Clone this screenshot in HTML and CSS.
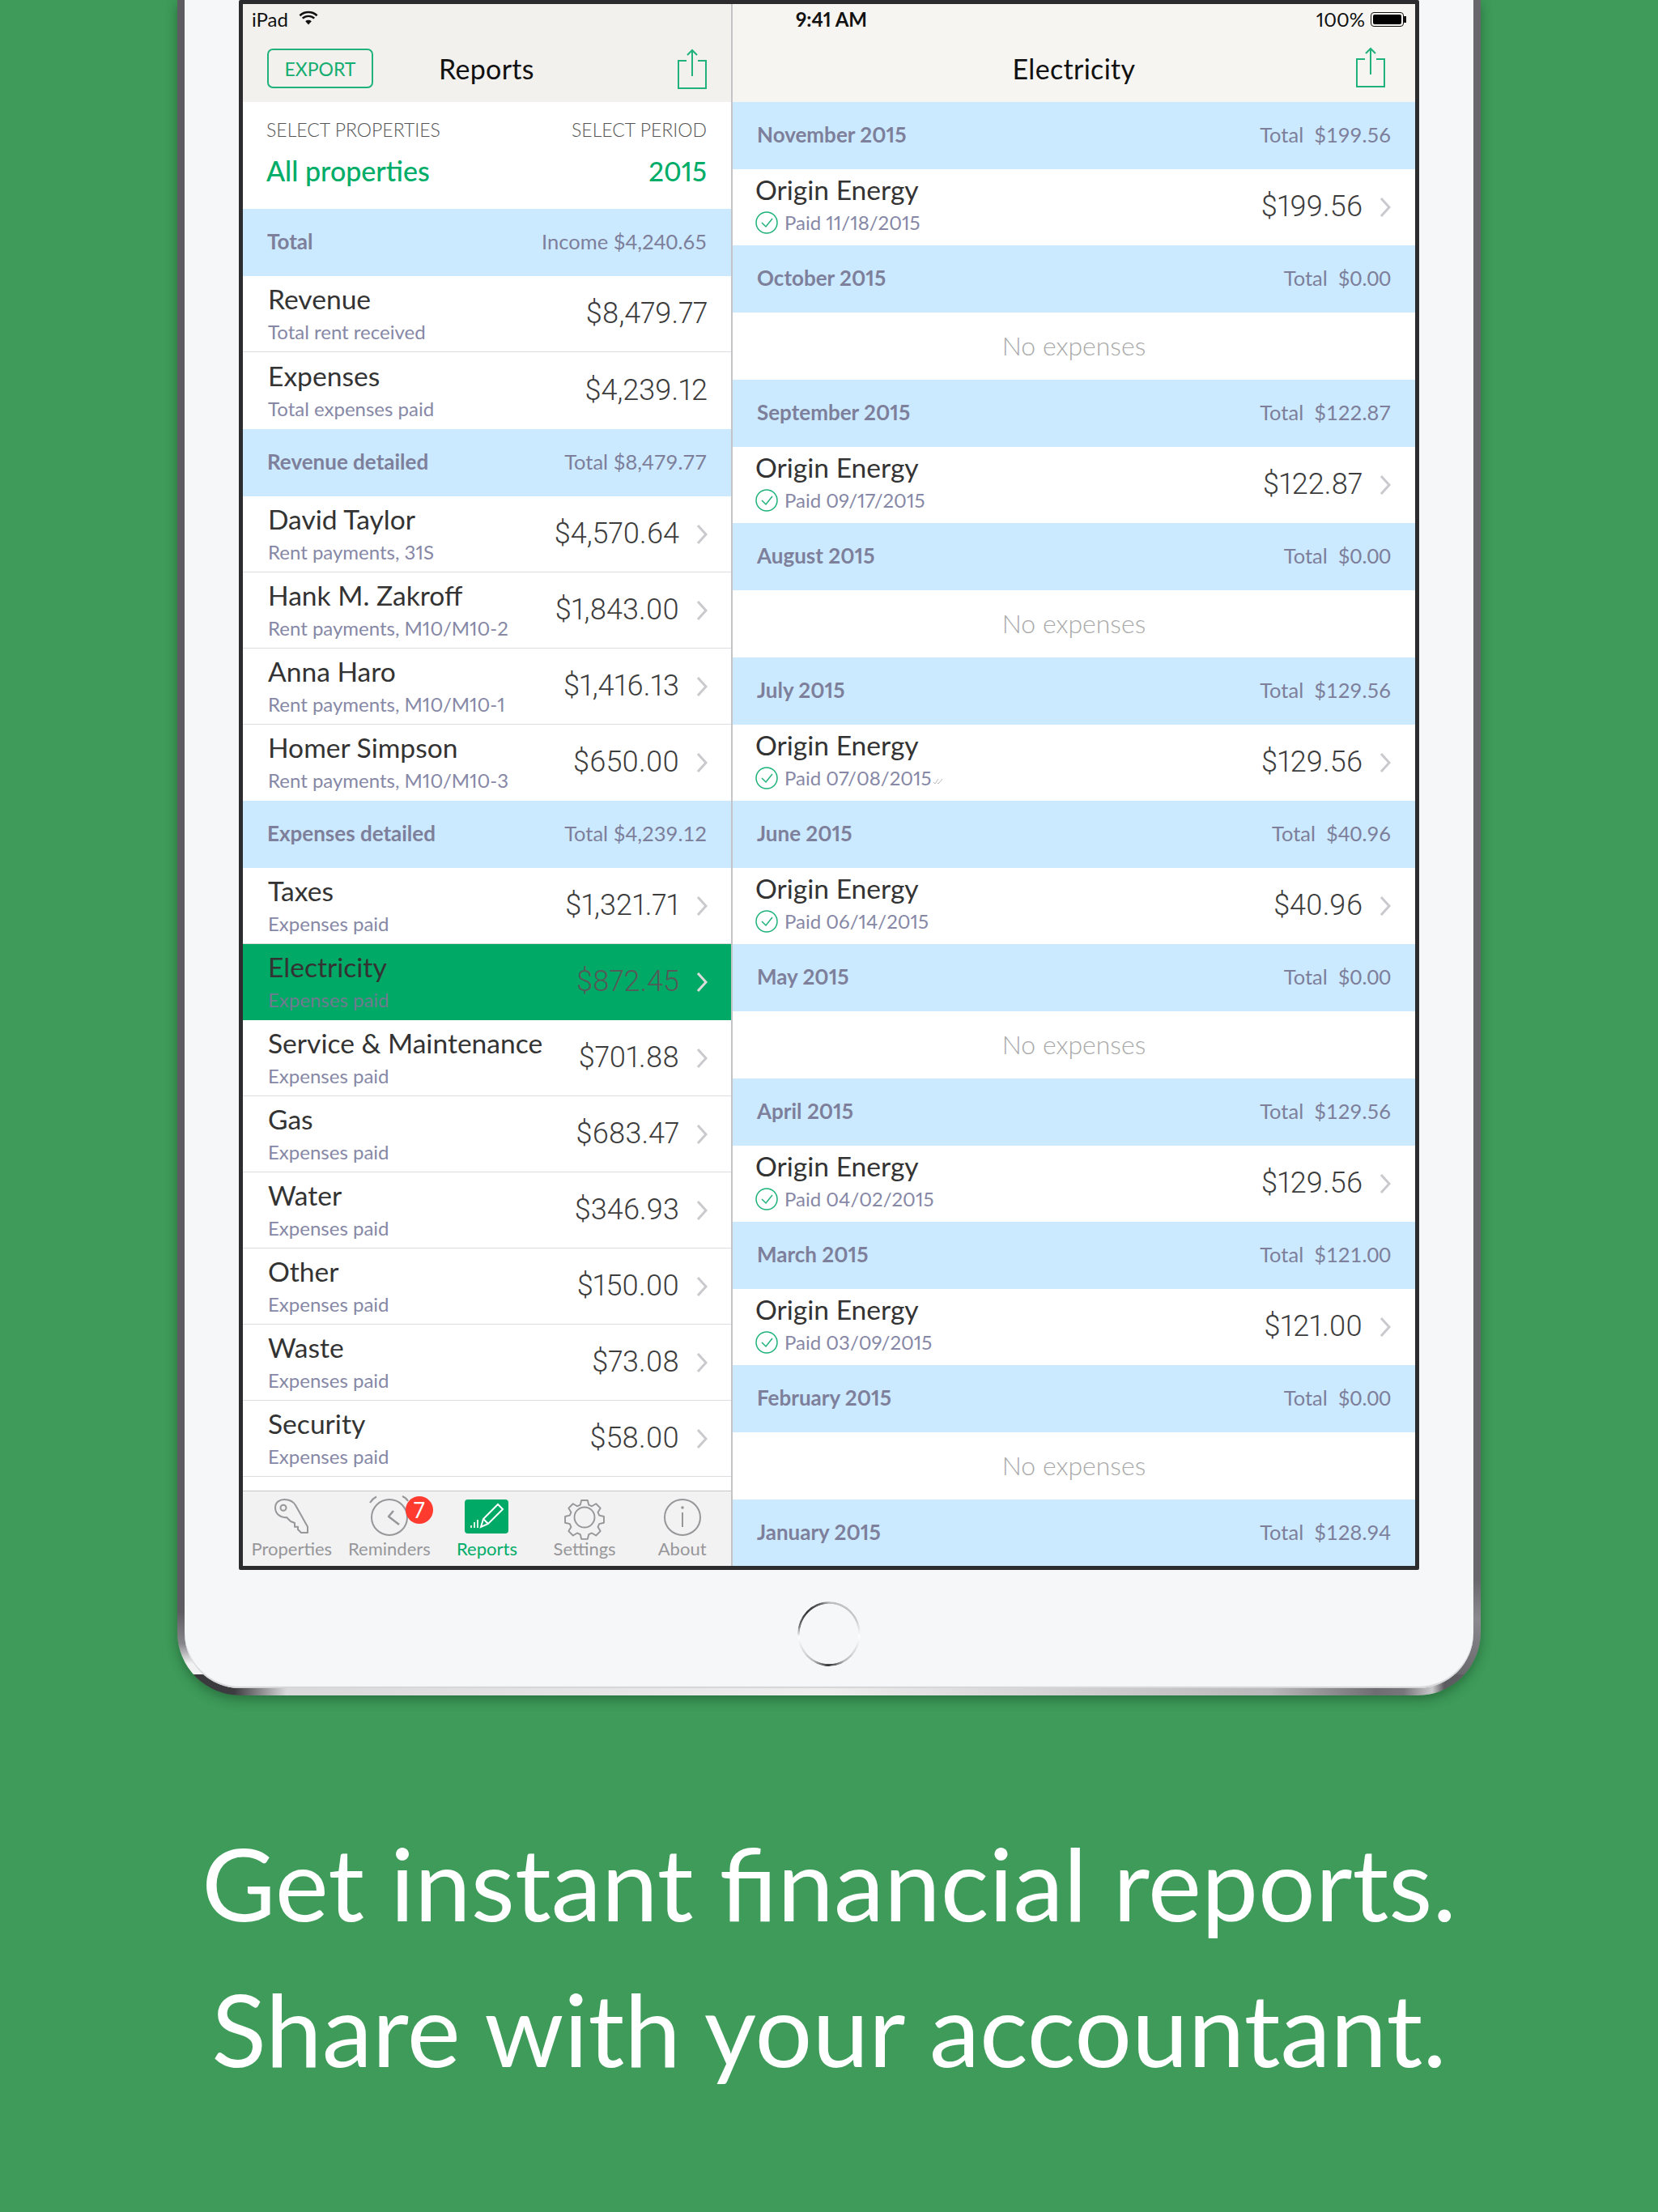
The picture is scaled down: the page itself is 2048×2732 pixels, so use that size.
FILE: index.html
```html
<!DOCTYPE html>
<html lang="en">

<head>
  <meta charset="UTF-8">
  <title>Reports</title>
  <link rel="stylesheet" href="styles.css">
</head>

<body>
  <div class="device">
    <div class="bezel">
      <div class="screen">

        <div class="pane pane-left">
          <div class="topbar">
            <div class="status">
              <span>iPad</span>
              <svg class="wifi" viewBox="0 0 24 18"><path d="M12 17.500 8.200 13.200a5.600 5.600 0 0 1 7.600 0z"/><path d="M5.600 10.600a9.400 9.400 0 0 1 12.800 0l1.700-1.800a12 12 0 0 0-16.200 0z"/><path d="M2.300 7.200a14 14 0 0 1 19.400 0l1.800-1.900a17 17 0 0 0-23 0z"/></svg>
            </div>
            <div class="nav">
              <div class="export">EXPORT</div>
              <div class="nav-title">Reports</div>
              <svg class="share" viewBox="0 0 36 50"><path d="M11 15H1v34h34V15H25M18 34V2M12 8l6-6 6 6"/></svg>
            </div>
          </div>

          <div class="pickers">
            <div class="picker-labels"><span>SELECT PROPERTIES</span><span>SELECT PERIOD</span></div>
            <div class="picker-values"><span>All properties</span><span class="year">2015</span></div>
          </div>

          <div class="list">
            <div class="head"><b>Total</b><span>Income $4,240.65</span></div>
            <div class="row">
              <div class="row-text"><div class="title">Revenue</div><div class="sub">Total rent received</div></div>
              <div class="amount">$8,479.77</div>
            </div>
            <div class="row last tall">
              <div class="row-text"><div class="title">Expenses</div><div class="sub">Total expenses paid</div></div>
              <div class="amount">$4,239.12</div>
            </div>

            <div class="head"><b>Revenue detailed</b><span>Total $8,479.77</span></div>
            <div class="row">
              <div class="row-text"><div class="title">David Taylor</div><div class="sub">Rent payments, 31S</div></div>
              <div class="amount">$4,570.64</div><svg class="chev" viewBox="0 0 14 26"><path d="M2 2l10 11L2 24"/></svg>
            </div>
            <div class="row">
              <div class="row-text"><div class="title">Hank M. Zakroff</div><div class="sub">Rent payments, M10/M10-2</div></div>
              <div class="amount">$1,843.00</div><svg class="chev" viewBox="0 0 14 26"><path d="M2 2l10 11L2 24"/></svg>
            </div>
            <div class="row">
              <div class="row-text"><div class="title">Anna Haro</div><div class="sub">Rent payments, M10/M10-1</div></div>
              <div class="amount">$1,416.13</div><svg class="chev" viewBox="0 0 14 26"><path d="M2 2l10 11L2 24"/></svg>
            </div>
            <div class="row last">
              <div class="row-text"><div class="title">Homer Simpson</div><div class="sub">Rent payments, M10/M10-3</div></div>
              <div class="amount">$650.00</div><svg class="chev" viewBox="0 0 14 26"><path d="M2 2l10 11L2 24"/></svg>
            </div>

            <div class="head"><b>Expenses detailed</b><span>Total $4,239.12</span></div>
            <div class="row">
              <div class="row-text"><div class="title">Taxes</div><div class="sub">Expenses paid</div></div>
              <div class="amount">$1,321.71</div><svg class="chev" viewBox="0 0 14 26"><path d="M2 2l10 11L2 24"/></svg>
            </div>
            <div class="row selected">
              <div class="row-text"><div class="title">Electricity</div><div class="sub">Expenses paid</div></div>
              <div class="amount">$872.45</div><svg class="chev" viewBox="0 0 14 26"><path d="M2 2l10 11L2 24"/></svg>
            </div>
            <div class="row">
              <div class="row-text"><div class="title">Service &amp; Maintenance</div><div class="sub">Expenses paid</div></div>
              <div class="amount">$701.88</div><svg class="chev" viewBox="0 0 14 26"><path d="M2 2l10 11L2 24"/></svg>
            </div>
            <div class="row">
              <div class="row-text"><div class="title">Gas</div><div class="sub">Expenses paid</div></div>
              <div class="amount">$683.47</div><svg class="chev" viewBox="0 0 14 26"><path d="M2 2l10 11L2 24"/></svg>
            </div>
            <div class="row">
              <div class="row-text"><div class="title">Water</div><div class="sub">Expenses paid</div></div>
              <div class="amount">$346.93</div><svg class="chev" viewBox="0 0 14 26"><path d="M2 2l10 11L2 24"/></svg>
            </div>
            <div class="row">
              <div class="row-text"><div class="title">Other</div><div class="sub">Expenses paid</div></div>
              <div class="amount">$150.00</div><svg class="chev" viewBox="0 0 14 26"><path d="M2 2l10 11L2 24"/></svg>
            </div>
            <div class="row">
              <div class="row-text"><div class="title">Waste</div><div class="sub">Expenses paid</div></div>
              <div class="amount">$73.08</div><svg class="chev" viewBox="0 0 14 26"><path d="M2 2l10 11L2 24"/></svg>
            </div>
            <div class="row">
              <div class="row-text"><div class="title">Security</div><div class="sub">Expenses paid</div></div>
              <div class="amount">$58.00</div><svg class="chev" viewBox="0 0 14 26"><path d="M2 2l10 11L2 24"/></svg>
            </div>
            <div class="row">
              <div class="row-text"><div class="title">Admin/Legal fee</div></div>
            </div>
          </div>

          <div class="tabbar">
            <div class="tab">
              <svg class="tab-icon" viewBox="0 0 46 46"><circle cx="13" cy="11.300" r="3.500"/><path d="M28 8l15 26.700V42h-8l-4-4v-3.300h-4V30l-5-2-5-5C10 24 3 19 3 11 3 4 9 1 14 1c6 0 11 2 14 7z"/></svg>
              <span>Properties</span>
            </div>
            <div class="tab">
              <span class="badge">7</span>
              <svg class="tab-icon" viewBox="0 0 46 46"><circle cx="23" cy="23" r="22"/><path d="M-1 5Q2 0 7-2.500M39-3q5 2 7 6"/><path class="hands" d="M28 15l-6 7 13 10"/></svg>
              <span>Reminders</span>
            </div>
            <div class="tab active">
              <svg class="report-icon" viewBox="0 0 54 42"><rect width="54" height="42" rx="4" fill="#00a966"/><path class="pen" d="M20 34l3-10L41 6l6 6-18 18zM23 24l6 6"/><path class="bars" d="M8 35v-3M12 35v-7M16 35v-10"/></svg>
              <span>Reports</span>
            </div>
            <div class="tab">
              <svg class="tab-icon gear" viewBox="0 0 48 48"><circle cx="24" cy="24" r="13"/><path d="M20 2h8l1.500 6 4 1.700 5.300-3.200 5.700 5.700-3.200 5.300 1.700 4 6 1.500v8l-6 1.500-1.700 4 3.200 5.300-5.700 5.700-5.300-3.200-4 1.700-1.500 6h-8l-1.500-6-4-1.700-5.300 3.200-5.700-5.700 3.200-5.300-1.700-4-6-1.500v-8l6-1.500 1.700-4-3.200-5.300 5.700-5.700 5.300 3.200 4-1.700z"/></svg>
              <span>Settings</span>
            </div>
            <div class="tab">
              <svg class="tab-icon" viewBox="0 0 46 46"><circle cx="23" cy="23" r="22"/><path d="M23 17v18"/><circle class="dot" cx="23" cy="11" r="1.800"/></svg>
              <span>About</span>
            </div>
          </div>
        </div>

        <div class="pane pane-right">
          <div class="topbar">
            <div class="status status-right">
              <span class="clock">9:41 AM</span>
              <span class="battery-wrap">100%<span class="battery"><i></i></span></span>
            </div>
            <div class="nav nav-right">
              <div class="nav-title">Electricity</div>
              <svg class="share" viewBox="0 0 36 50"><path d="M11 15H1v34h34V15H25M18 34V2M12 8l6-6 6 6"/></svg>
            </div>
          </div>

          <div class="list">
            <div class="head"><b>November 2015</b><span>Total&nbsp; $199.56</span></div>
            <div class="row">
              <div class="row-text"><div class="title">Origin Energy</div><div class="sub paid"><svg class="tick" viewBox="0 0 28 28"><circle cx="14" cy="14" r="13"/><path d="M8 14l5 5 8-10"/></svg>Paid 11/18/2015</div></div>
              <div class="amount">$199.56</div><svg class="chev" viewBox="0 0 14 26"><path d="M2 2l10 11L2 24"/></svg>
            </div>
            <div class="head"><b>October 2015</b><span>Total&nbsp; $0.00</span></div>
            <div class="empty">No expenses</div>
            <div class="head"><b>September 2015</b><span>Total&nbsp; $122.87</span></div>
            <div class="row">
              <div class="row-text"><div class="title">Origin Energy</div><div class="sub paid"><svg class="tick" viewBox="0 0 28 28"><circle cx="14" cy="14" r="13"/><path d="M8 14l5 5 8-10"/></svg>Paid 09/17/2015</div></div>
              <div class="amount">$122.87</div><svg class="chev" viewBox="0 0 14 26"><path d="M2 2l10 11L2 24"/></svg>
            </div>
            <div class="head"><b>August 2015</b><span>Total&nbsp; $0.00</span></div>
            <div class="empty">No expenses</div>
            <div class="head"><b>July 2015</b><span>Total&nbsp; $129.56</span></div>
            <div class="row">
              <div class="row-text"><div class="title">Origin Energy</div><div class="sub paid"><svg class="tick" viewBox="0 0 28 28"><circle cx="14" cy="14" r="13"/><path d="M8 14l5 5 8-10"/></svg>Paid 07/08/2015<svg class="seen" viewBox="0 0 14 8"><path d="M1 5l2 2 4-6M6 6l1 1 5-6"/></svg></div></div>
              <div class="amount">$129.56</div><svg class="chev" viewBox="0 0 14 26"><path d="M2 2l10 11L2 24"/></svg>
            </div>
            <div class="head"><b>June 2015</b><span>Total&nbsp; $40.96</span></div>
            <div class="row">
              <div class="row-text"><div class="title">Origin Energy</div><div class="sub paid"><svg class="tick" viewBox="0 0 28 28"><circle cx="14" cy="14" r="13"/><path d="M8 14l5 5 8-10"/></svg>Paid 06/14/2015</div></div>
              <div class="amount">$40.96</div><svg class="chev" viewBox="0 0 14 26"><path d="M2 2l10 11L2 24"/></svg>
            </div>
            <div class="head"><b>May 2015</b><span>Total&nbsp; $0.00</span></div>
            <div class="empty">No expenses</div>
            <div class="head"><b>April 2015</b><span>Total&nbsp; $129.56</span></div>
            <div class="row">
              <div class="row-text"><div class="title">Origin Energy</div><div class="sub paid"><svg class="tick" viewBox="0 0 28 28"><circle cx="14" cy="14" r="13"/><path d="M8 14l5 5 8-10"/></svg>Paid 04/02/2015</div></div>
              <div class="amount">$129.56</div><svg class="chev" viewBox="0 0 14 26"><path d="M2 2l10 11L2 24"/></svg>
            </div>
            <div class="head"><b>March 2015</b><span>Total&nbsp; $121.00</span></div>
            <div class="row">
              <div class="row-text"><div class="title">Origin Energy</div><div class="sub paid"><svg class="tick" viewBox="0 0 28 28"><circle cx="14" cy="14" r="13"/><path d="M8 14l5 5 8-10"/></svg>Paid 03/09/2015</div></div>
              <div class="amount">$121.00</div><svg class="chev" viewBox="0 0 14 26"><path d="M2 2l10 11L2 24"/></svg>
            </div>
            <div class="head"><b>February 2015</b><span>Total&nbsp; $0.00</span></div>
            <div class="empty">No expenses</div>
            <div class="head"><b>January 2015</b><span>Total&nbsp; $128.94</span></div>
          </div>
        </div>

      </div>
      <div class="home"></div>
    </div>
  </div>

  <div class="tagline">
    <p>Get instant financial reports.</p>
    <p>Share with your accountant.</p>
  </div>
</body>

</html>
```

FILE: styles.css
```css
* {
  padding: 0;
  margin: 0;
  box-sizing: border-box;
}

body {
  width: 2048px;
  height: 2732px;
  overflow: hidden;
  background-color: #3e9b59;
  font-family: "Lato", "Noto Sans", sans-serif;
  font-variant-numeric: proportional-nums;
  color: #333;
}

/* device shell */
.device {
  width: 1610px;
  height: 2094px;
  margin-left: 219px;
  padding: 0 9px 9px;
  border-radius: 0 0 78px 78px;
  background:
    linear-gradient(to right, #39393c 0, #3c3c40 70px, #d9d9db 135px, #eeeeef 800px, #b9b9bb 1350px, #6e6e72 1480px, #77777b 1515px, #c9c9cc 1550px, #5c5c60 1565px, #606064 100%) bottom / 100% 26px no-repeat,
    linear-gradient(to bottom, #5d5d61 0, #5d5d61 1990px, #85858a 2030px, #f2f2f2 2055px, #f2f2f2 100%) left / 50% 100% no-repeat,
    linear-gradient(to bottom, #68686c 0, #68686c 1950px, #8b8b8f 2000px, #5c5c60 100%) right / 50% 100% no-repeat;
  box-shadow: 0 5px 14px rgba(15, 60, 30, 0.45);
}

.bezel {
  height: 100%;
  padding: 0 67px;
  border-radius: 0 0 68px 68px;
  background-color: #f6f7f9;
  box-shadow: inset 0 -2px 1px #d4d5d7;
}

.screen {
  height: 1939px;
  display: flex;
  border: 5px solid #2c2c2e;
  border-radius: 2px;
  overflow: hidden;
}

.home {
  width: 78px;
  height: 80px;
  margin: 39px auto 0;
  border-radius: 50%;
  background: conic-gradient(#bdbdbf 0deg, #c8c8ca 60deg, #fff 95deg, #bbb 150deg, #333 180deg, #bbb 210deg, #fff 265deg, #777 285deg, #333 315deg, #666 345deg, #bdbdbf 360deg);
  -webkit-mask: radial-gradient(closest-side, transparent 92%, #000 94%);
  mask: radial-gradient(closest-side, transparent 92%, #000 94%);
}

/* panes */
.pane {
  display: flex;
  flex-direction: column;
  background-color: #fff;
}

.pane-left {
  width: 605px;
  border-right: 2px solid #c4c4c6;
}

.pane-right {
  flex: 1;
}

.topbar {
  height: 121px;
  flex: none;
  background-color: #f2f1ee;
}

.pane-right .topbar {
  background-color: #f6f5f1;
}

.status {
  height: 33px;
  padding: 4px 0 0 11px;
  display: flex;
  align-items: center;
  gap: 13px;
  font-size: 24px;
  color: #111;
}

.wifi {
  width: 24px;
  height: 18px;
  margin-top: -4px;
  fill: #111;
}

.status-right {
  justify-content: space-between;
  padding: 4px 11px 0 78px;
}

.clock {
  font-weight: 700;
}

.battery-wrap {
  display: flex;
  align-items: center;
  gap: 7px;
}

.battery {
  width: 41px;
  height: 18px;
  margin-right: 3px;
  padding: 2px;
  border: 1px solid #111;
  border-radius: 4px;
  position: relative;
}

.battery::after {
  content: "";
  position: absolute;
  right: -4px;
  top: 4px;
  width: 3px;
  height: 8px;
  background-color: #111;
}

.battery i {
  display: block;
  height: 100%;
  background-color: #000;
  border-radius: 2px;
}

.nav {
  height: 88px;
  padding: 5px 30px 0;
  display: flex;
  align-items: center;
  position: relative;
}

.nav-right {
  justify-content: center;
}

.export {
  width: 131px;
  height: 49px;
  border: 2px solid #1fb27a;
  border-radius: 7px;
  color: #15ad70;
  font-size: 23px;
  line-height: 46px;
  text-align: center;
}

.nav-title {
  font-size: 34px;
  color: #111;
  margin-left: 81px;
  letter-spacing: 0.3px;
}

.nav-right .nav-title {
  margin-left: 0;
}

.share {
  width: 36px;
  height: 50px;
  margin-left: auto;
  fill: none;
  stroke: #1fb27a;
  stroke-width: 2;
}

.nav-right .share {
  position: absolute;
  right: 37px;
  top: 20px;
}

/* period pickers */
.pickers {
  height: 132px;
  flex: none;
  padding: 19px 30px 0 29px;
}

.picker-labels,
.picker-values,
.head,
.row {
  display: flex;
  justify-content: space-between;
}

.picker-labels {
  font-size: 23px;
  font-weight: 300;
  color: #555;
  line-height: 30px;
}

.picker-values {
  margin-top: 13px;
  font-size: 34px;
  font-weight: 500;
  color: #00ad68;
  line-height: 46px;
}

.year {
  font-size: 33px;
}

/* tables */
.list {
  flex: 1;
  min-height: 0;
  overflow: hidden;
}

.head {
  height: 83px;
  padding: 24px 30px 0;
  background-color: #cceaff;
  font-size: 26px;
  line-height: 32px;
  color: #7d7f9b;
}

.head span {
  font-size: 25.500px;
  font-variant-numeric: tabular-nums;
}

.head b {
  font-weight: 700;
}

.row {
  height: 94px;
  padding: 0 29px 0 31px;
  align-items: center;
  border-bottom: 1px solid #dcdde1;
  background-color: #fff;
}

.row.tall {
  height: 95px;
}

.row.last,
.pane-right .row {
  border-bottom: 0;
}

.pane-right .row {
  padding: 0 30px 0 28px;
}

.row-text {
  flex: 1;
  padding-bottom: 4px;
}

.pane-right .row-text {
  padding-bottom: 10px;
}

.title {
  font-size: 33.600px;
  line-height: 44px;
  color: #333;
}

.sub {
  font-size: 24px;
  line-height: 30px;
  color: #8688a6;
  margin-top: 4px;
}

.amount {
  padding-bottom: 2px;
  font-family: "Roboto", "Liberation Sans", sans-serif;
  font-size: 36px;
  font-weight: 300;
  color: #3c3c3c;
}

.chev {
  width: 14px;
  height: 26px;
  margin-left: 21px;
  fill: none;
  stroke: #c9c9ce;
  stroke-width: 3;
}

.row.selected {
  background-color: #00a966;
  border-bottom: 0;
}

.selected .sub {
  color: #707a90;
}

.selected .amount {
  color: #555a58;
}

.selected .chev {
  stroke: #dcdcdc;
}

.paid {
  display: flex;
  align-items: center;
  gap: 8px;
}

.tick {
  width: 28px;
  height: 28px;
  fill: none;
  stroke: #1fb27a;
  stroke-width: 1.500;
}

.seen {
  width: 14px;
  height: 8px;
  margin: 8px 0 0 -7px;
  fill: none;
  stroke: #bbb;
}

.empty {
  height: 83px;
  text-align: center;
  font-size: 32px;
  line-height: 81px;
  font-weight: 300;
  color: #aaa;
}

/* tab bar */
.tabbar {
  height: 93px;
  flex: none;
  display: flex;
  background-color: #f2f2f3;
  border-top: 1px solid #c6c6c8;
}

.tab {
  flex: 1;
  padding-top: 9px;
  display: flex;
  flex-direction: column;
  align-items: center;
  position: relative;
  font-size: 22px;
  line-height: 26px;
  color: #97979a;
}

.tab-icon {
  width: 46px;
  height: 46px;
  margin-bottom: 3px;
  overflow: visible;
  fill: none;
  stroke: #97979a;
  stroke-width: 2;
  stroke-linejoin: round;
}

.tab-icon .dot {
  fill: #97979a;
  stroke: none;
}

.tab-icon .hands {
  stroke-width: 2.500;
}

.gear {
  width: 48px;
}

.report-icon {
  width: 54px;
  height: 42px;
  margin: 1px 0 6px;
}

.report-icon .pen {
  fill: none;
  stroke: #fff;
  stroke-width: 2;
}

.report-icon .bars {
  fill: none;
  stroke: #d8f2e5;
  stroke-width: 2;
}

.tab.active {
  color: #00ad68;
}

.badge {
  position: absolute;
  left: 80px;
  top: 6px;
  width: 34px;
  height: 34px;
  border-radius: 50%;
  background-color: #ff3b30;
  color: #fff;
  font-size: 26px;
  line-height: 34px;
  text-align: center;
}

/* caption */
.tagline {
  margin-top: 141px;
  text-align: center;
  font-size: 125px;
  line-height: 180px;
  color: #fff;
}
```
